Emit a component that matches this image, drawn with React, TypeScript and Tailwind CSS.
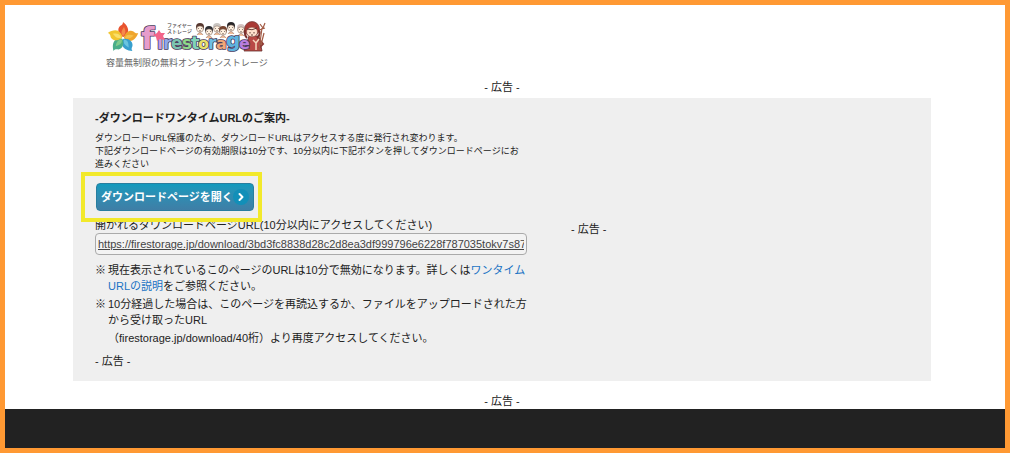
import { ChevronRight } from "lucide-react";

const downloadUrl = "https://firestorage.jp/download/3bd3fc8838d28c2d8ea3df999796e6228f787035tokv7s87x";

const letters = [
    { char: "f", x: 35, y: 28, color: "#e79ccb", size: 31 },
    { char: "i", x: 51, y: 28, color: "#c79be0", size: 18 },
    { char: "r", x: 57, y: 28, color: "#8fa8ea", size: 18 },
    { char: "e", x: 65, y: 28, color: "#7cc4b0", size: 17 },
    { char: "s", x: 76, y: 28, color: "#8fd98a", size: 17 },
    { char: "t", x: 85, y: 28, color: "#7fd3b8", size: 18 },
    { char: "o", x: 92, y: 28, color: "#e8e06a", size: 16 },
    { char: "r", x: 102, y: 28, color: "#6cc0e4", size: 17 },
    { char: "a", x: 110, y: 28, color: "#f0a878", size: 16 },
    { char: "g", x: 120, y: 26, color: "#5fb4e0", size: 20 },
    { char: "e", x: 133, y: 28, color: "#b97ee0", size: 16 },
];

const faces = [
    { x: 94, y: 7, hair: "#57382f" },
    { x: 103, y: 10, hair: "#2f2f33" },
    { x: 111, y: 7, hair: "#c9c5c1" },
    { x: 117, y: 10, hair: "#784531" },
    { x: 125, y: 6, hair: "#292629" },
    { x: 135, y: 8, hair: "#d5c3c1" },
];

const petals = [
    { angle: 0, color: "#e8532f", light: "#f58a4a" },
    { angle: 72, color: "#efa52d", light: "#f5c04a" },
    { angle: 144, color: "#379fce", light: "#69c4df" },
    { angle: 216, color: "#49ad89", light: "#7fcb8b" },
    { angle: 288, color: "#f2c530", light: "#f9df6a" },
];

function Logo() {
    return (
        <svg viewBox="0 0 164 36" className="block w-[164px] h-9" role="img" aria-label="firestorage">
            {/* Flame star */}
            {petals.map((petal) => (
                <g key={petal.angle} transform={`translate(17 17) rotate(${petal.angle})`}>
                    <path d="M0-1C-5-4-6-9-3-12C-1-13 0-14 0-16C4-13 7-8 4-4C3-2 1-1 0-1Z" fill={petal.color} />
                    <path d="M0-2C-3-5-1-8 1-11C3-7 3-4 0-2Z" fill={petal.light} />
                </g>
            ))}

            {/* Family behind the name */}
            {faces.map((face) => (
                <g key={face.x}>
                    <circle cx={face.x} cy={face.y - 1} r="4" fill={face.hair} />
                    <ellipse cx={face.x} cy={face.y + 1} rx="3.4" ry="3.1" fill="#fff0df" stroke="#7b6358" strokeWidth="0.5" />
                    <path d={`M${face.x - 2} ${face.y + 0.5}h1M${face.x + 1} ${face.y + 0.5}h1M${face.x - 1} ${face.y + 2.5}q1 1 2 0`} stroke="#4a3937" strokeWidth="0.6" fill="none" />
                    <path d={`M${face.x - 3} ${face.y + 7}q3-5 6 0`} fill="#efbd9a" stroke="#875f52" strokeWidth="0.5" />
                </g>
            ))}

            {/* Girl with the staff */}
            <path d="M143 15L138 30H156L153 15Z" fill="#b94945" stroke="#64302d" strokeWidth="0.8" />
            <path d="M152 17L157 23L153 27" fill="none" stroke="#8d3b36" strokeWidth="2" />
            <circle cx="146" cy="8" r="7.5" fill="#a83a35" stroke="#64302d" strokeWidth="0.6" />
            <path d="M139 9Q138 14 141 17M153 9Q155 14 151 17" stroke="#7a302b" strokeWidth="2" fill="none" />
            <ellipse cx="146" cy="11" rx="5.5" ry="4.8" fill="#ffe1cd" stroke="#7c433a" strokeWidth="0.5" />
            <path d="M141 8Q146 10 151 7M144 11v1.5M148 11v1.5M145 14h2" stroke="#53302b" strokeWidth="0.9" fill="none" />
            <path d="M147 19L150 22L153 18M150 22V29" stroke="#f4d6bb" strokeWidth="1.5" fill="none" />
            <path d="M156 7L153 29M153 9L159 7M154 3L157 7L159 2M158 12L155 24" stroke="#a35b45" strokeWidth="1.2" fill="none" />

            <g fontFamily="DejaVu Sans, sans-serif" fontWeight="700" stroke="#493a5c" strokeWidth="1.6" paintOrder="stroke" strokeLinejoin="round">
                {letters.map((letter) => (
                    <text key={letter.x} x={letter.x} y={letter.y} fontSize={letter.size} fill={letter.color}>{letter.char}</text>
                ))}
            </g>
            <path d="M53 9L55 12L59 12L57 15L59 19L54 18L51 20L50 16L47 14L51 12Z" fill="#f36489" />
            <g fontFamily="Liberation Sans, Noto Sans CJK JP, sans-serif" fontWeight="500" fontSize="5" fill="#403b40">
                <text x="61" y="6">ファイヤー</text>
                <text x="61" y="12">ストレージ</text>
            </g>
        </svg>
    );
}

function Ad() {
    return <p className="text-[11px] leading-4">- 広告 -</p>;
}

export default function App() {
    return (
        <div className="border-[5px] border-[#ff9933] bg-white font-['Liberation_Sans','Noto_Sans_CJK_JP',sans-serif] text-[#222]">
            <div className="pl-[68px] pr-[74px]">
                <header className="pt-4 pl-[33px]">
                    <a href="/" className="block w-fit">
                        <Logo />
                    </a>
                    <p className="text-[9px] leading-3 text-[#666]">容量無制限の無料オンラインストレージ</p>
                </header>

                <div className="pt-2.5 pb-[3px] text-center">
                    <Ad />
                </div>

                <main className="flex bg-[#efefef] px-[22px] py-3">
                    <section className="w-[434px] shrink-0">
                        <h1 className="text-[11px] leading-4 font-bold">-ダウンロードワンタイムURLのご案内-</h1>
                        <p className="mt-1.5 pr-2 text-[9px] leading-[13px]">
                            ダウンロードURL保護のため、ダウンロードURLはアクセスする度に発行され変わります。
                            <br />
                            下記ダウンロードページの有効期限は10分です、10分以内に下記ボタンを押してダウンロードページにお進みください
                        </p>

                        <div className="relative z-10 mt-3 ml-px w-[158px]">
                            <button
                                type="button"
                                className="flex h-7 w-full items-center justify-between rounded border border-[#287e9f] bg-linear-to-b from-[#109abd] to-[#3e7ea6] px-1 text-[11px] font-bold whitespace-nowrap text-white"
                            >
                                ダウンロードページを開く
                                <span className="flex size-4 items-center justify-center rounded-full bg-[#128fb8]">
                                    <ChevronRight className="size-3" strokeWidth={4} />
                                </span>
                            </button>
                            <div className="pointer-events-none absolute -inset-y-[11px] -left-[15px] -right-2 border-4 border-[#f2e92b]" />
                        </div>

                        <label htmlFor="download-url" className="mt-1.5 block text-[11px] leading-4">
                            開かれるダウンロードページURL(10分以内にアクセスしてください)
                        </label>
                        <input
                            id="download-url"
                            type="text"
                            readOnly
                            value={downloadUrl}
                            className="block h-[22px] w-[432px] rounded border border-[#aaa] bg-[#f3f3f3] px-0.5 text-[11px] text-[#444] underline"
                        />

                        <ul className="mt-[7px] space-y-0.5 text-[11px] leading-4">
                            <li className="flex gap-0.5">
                                <span>※</span>
                                <p>
                                    現在表示されているこのページのURLは10分で無効になります。詳しくは
                                    <a href="#onetime" className="text-[#1a73c4]">ワンタイムURLの説明</a>
                                    をご参照ください。
                                </p>
                            </li>
                            <li className="flex gap-0.5">
                                <span>※</span>
                                <div className="space-y-0.5">
                                    <p>10分経過した場合は、このページを再読込するか、ファイルをアップロードされた方から受け取ったURL</p>
                                    <p>（firestorage.jp/download/40桁）より再度アクセスしてください。</p>
                                </div>
                            </li>
                        </ul>
                        <div className="mt-[7px]">
                            <Ad />
                        </div>
                    </section>

                    <aside className="flex items-center pb-[22px] pl-[42px]">
                        <Ad />
                    </aside>
                </main>

                <div className="pt-3 text-center">
                    <Ad />
                </div>
            </div>
            <footer className="h-[39px] bg-[#222]" />
        </div>
    );
}
